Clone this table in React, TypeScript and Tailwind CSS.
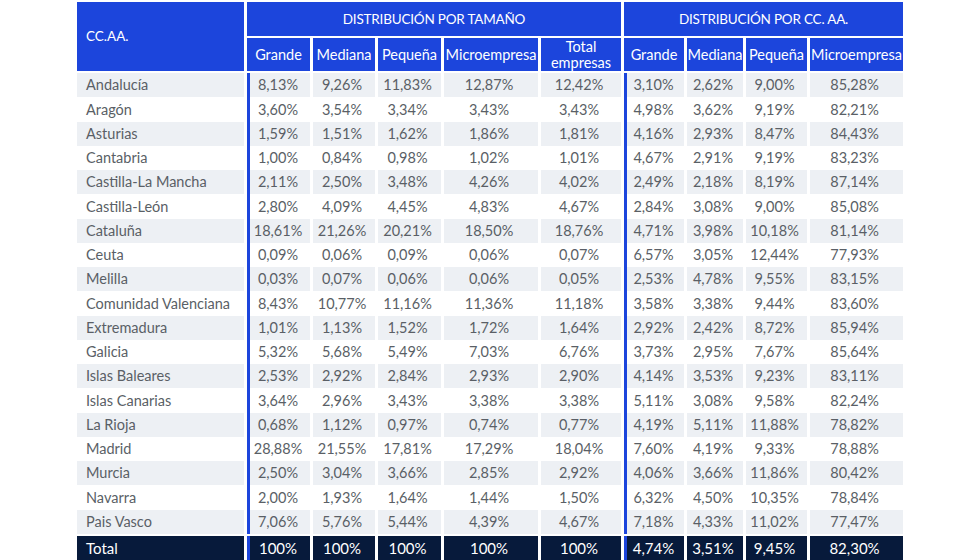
import React from "react";

const rows: [string, string[]][] = [
  ["Andalucía", ["8,13%", "9,26%", "11,83%", "12,87%", "12,42%", "3,10%", "2,62%", "9,00%", "85,28%"]],
  ["Aragón", ["3,60%", "3,54%", "3,34%", "3,43%", "3,43%", "4,98%", "3,62%", "9,19%", "82,21%"]],
  ["Asturias", ["1,59%", "1,51%", "1,62%", "1,86%", "1,81%", "4,16%", "2,93%", "8,47%", "84,43%"]],
  ["Cantabria", ["1,00%", "0,84%", "0,98%", "1,02%", "1,01%", "4,67%", "2,91%", "9,19%", "83,23%"]],
  ["Castilla-La Mancha", ["2,11%", "2,50%", "3,48%", "4,26%", "4,02%", "2,49%", "2,18%", "8,19%", "87,14%"]],
  ["Castilla-León", ["2,80%", "4,09%", "4,45%", "4,83%", "4,67%", "2,84%", "3,08%", "9,00%", "85,08%"]],
  ["Cataluña", ["18,61%", "21,26%", "20,21%", "18,50%", "18,76%", "4,71%", "3,98%", "10,18%", "81,14%"]],
  ["Ceuta", ["0,09%", "0,06%", "0,09%", "0,06%", "0,07%", "6,57%", "3,05%", "12,44%", "77,93%"]],
  ["Melilla", ["0,03%", "0,07%", "0,06%", "0,06%", "0,05%", "2,53%", "4,78%", "9,55%", "83,15%"]],
  ["Comunidad Valenciana", ["8,43%", "10,77%", "11,16%", "11,36%", "11,18%", "3,58%", "3,38%", "9,44%", "83,60%"]],
  ["Extremadura", ["1,01%", "1,13%", "1,52%", "1,72%", "1,64%", "2,92%", "2,42%", "8,72%", "85,94%"]],
  ["Galicia", ["5,32%", "5,68%", "5,49%", "7,03%", "6,76%", "3,73%", "2,95%", "7,67%", "85,64%"]],
  ["Islas Baleares", ["2,53%", "2,92%", "2,84%", "2,93%", "2,90%", "4,14%", "3,53%", "9,23%", "83,11%"]],
  ["Islas Canarias", ["3,64%", "2,96%", "3,43%", "3,38%", "3,38%", "5,11%", "3,08%", "9,58%", "82,24%"]],
  ["La Rioja", ["0,68%", "1,12%", "0,97%", "0,74%", "0,77%", "4,19%", "5,11%", "11,88%", "78,82%"]],
  ["Madrid", ["28,88%", "21,55%", "17,81%", "17,29%", "18,04%", "7,60%", "4,19%", "9,33%", "78,88%"]],
  ["Murcia", ["2,50%", "3,04%", "3,66%", "2,85%", "2,92%", "4,06%", "3,66%", "11,86%", "80,42%"]],
  ["Navarra", ["2,00%", "1,93%", "1,64%", "1,44%", "1,50%", "6,32%", "4,50%", "10,35%", "78,84%"]],
  ["Pais Vasco", ["7,06%", "5,76%", "5,44%", "4,39%", "4,67%", "7,18%", "4,33%", "11,02%", "77,47%"]],
];

const total = ["100%", "100%", "100%", "100%", "100%", "4,74%", "3,51%", "9,45%", "82,30%"];

const widths = [
  "w-[63px]",
  "w-[62px]",
  "w-[63px]",
  "w-[94px]",
  "w-[80px]",
  "w-[60px]",
  "w-[56px]",
  "w-[61px]",
  "w-[93px]",
];

const BLUE = "bg-[#1c45dc]";

function Row({ name, vals, bg, text, h }: { name: string; vals: string[]; bg: string; text: string; h: string }) {
  return (
    <div className={`flex gap-[3px] ${h}`}>
      <div className={`w-[167px] ${bg} ${text} pl-[9px] flex items-center`}>{name}</div>
      {vals.map((v, i) => (
        <div
          key={i}
          className={`${widths[i]} ${bg} ${text} flex items-center justify-center pr-[4px] ${
            i === 0 || i === 5 ? "border-l-[3px] border-[#1c45dc]" : ""
          }`}
        >
          {v}
        </div>
      ))}
    </div>
  );
}

export default function App() {
  const sub = ["Grande", "Mediana", "Pequeña", "Microempresa"];
  return (
    <div className="w-[980px] h-[560px] bg-white overflow-hidden" style={{ fontFamily: "Lato, 'Noto Sans', sans-serif" }}>
      <div className="w-[826px] mx-auto pt-[2px] text-[14.5px]">
        {/* Header */}
        <div className="grid grid-cols-[167px_63px_62px_63px_94px_80px_60px_56px_61px_93px] grid-rows-[34px_33px] gap-x-[3px] gap-y-[2px] text-white">
          <div className={`row-span-2 ${BLUE} pl-[9px] flex items-center text-[13.5px]`}>CC.AA.</div>
          <div className={`col-span-5 ${BLUE} flex items-center justify-center text-[13.5px] tracking-[-0.2px]`}>
            DISTRIBUCIÓN POR TAMAÑO
          </div>
          <div className={`col-span-4 ${BLUE} flex items-center justify-center text-[13.5px] tracking-[-0.2px]`}>
            DISTRIBUCIÓN POR CC. AA.
          </div>
          {sub.map((s) => (
            <div key={"a" + s} className={`${BLUE} flex items-center justify-center`}>
              {s}
            </div>
          ))}
          <div className={`${BLUE} flex items-center justify-center text-center leading-[16px]`}>
            Total
            <br />
            empresas
          </div>
          {sub.map((s) => (
            <div key={"b" + s} className={`${BLUE} flex items-center justify-center`}>
              {s}
            </div>
          ))}
        </div>
        {/* Body */}
        <div className="mt-[2px] flex flex-col">
          {rows.map(([name, vals], i) => (
            <Row
              key={name}
              name={name}
              vals={vals}
              bg={i % 2 === 0 ? "bg-[#edf0f4]" : "bg-white"}
              text="text-[#5a5f66]"
              h="h-[24.26px]"
            />
          ))}
        </div>
        <div className="mt-[2px] text-[15px]">
          <Row name="Total" vals={total} bg="bg-[#071a3b]" text="text-white" h="h-[24px]" />
        </div>
      </div>
    </div>
  );
}
